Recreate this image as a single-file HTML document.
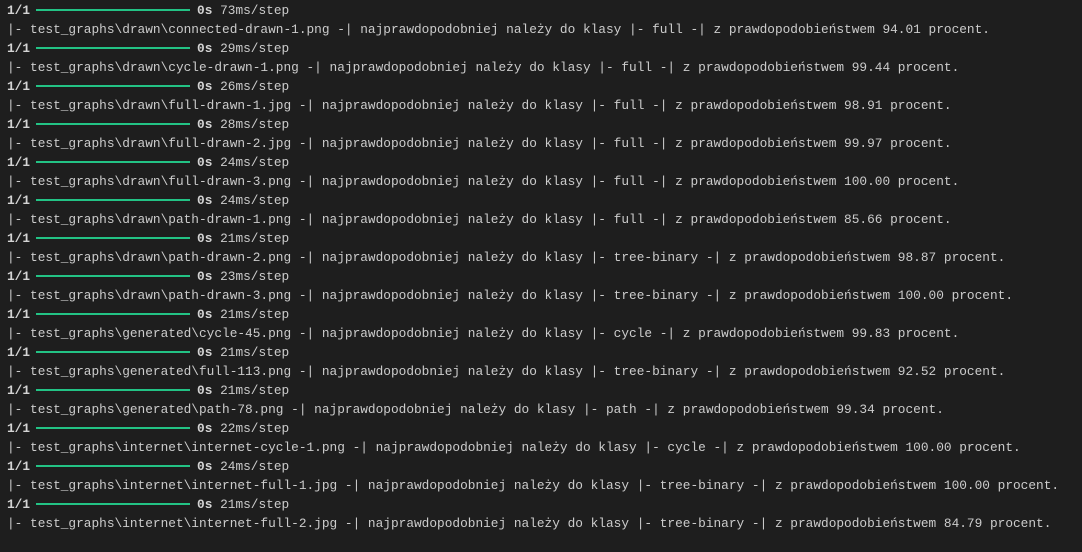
<!DOCTYPE html>
<html><head><meta charset="utf-8"><style>
html,body{margin:0;padding:0;background:#1e1e1e;width:1082px;height:552px;overflow:hidden}
pre{margin:0;padding:1px 0 0 7px;font-family:"Liberation Mono",monospace;font-size:12.8px;line-height:19px;color:#cccccc}
b{font-weight:bold;color:#d4d4d4}
.bar{display:inline-block;width:154px;height:2px;background:#23c385;vertical-align:3px;margin:0 7px 0 6px}
</style></head><body><pre><b>1/1</b><span class="bar"></span><b>0s</b> 73ms/step
|- test_graphs\drawn\connected-drawn-1.png -| najprawdopodobniej należy do klasy |- full -| z prawdopodobieństwem 94.01 procent.
<b>1/1</b><span class="bar"></span><b>0s</b> 29ms/step
|- test_graphs\drawn\cycle-drawn-1.png -| najprawdopodobniej należy do klasy |- full -| z prawdopodobieństwem 99.44 procent.
<b>1/1</b><span class="bar"></span><b>0s</b> 26ms/step
|- test_graphs\drawn\full-drawn-1.jpg -| najprawdopodobniej należy do klasy |- full -| z prawdopodobieństwem 98.91 procent.
<b>1/1</b><span class="bar"></span><b>0s</b> 28ms/step
|- test_graphs\drawn\full-drawn-2.jpg -| najprawdopodobniej należy do klasy |- full -| z prawdopodobieństwem 99.97 procent.
<b>1/1</b><span class="bar"></span><b>0s</b> 24ms/step
|- test_graphs\drawn\full-drawn-3.png -| najprawdopodobniej należy do klasy |- full -| z prawdopodobieństwem 100.00 procent.
<b>1/1</b><span class="bar"></span><b>0s</b> 24ms/step
|- test_graphs\drawn\path-drawn-1.png -| najprawdopodobniej należy do klasy |- full -| z prawdopodobieństwem 85.66 procent.
<b>1/1</b><span class="bar"></span><b>0s</b> 21ms/step
|- test_graphs\drawn\path-drawn-2.png -| najprawdopodobniej należy do klasy |- tree-binary -| z prawdopodobieństwem 98.87 procent.
<b>1/1</b><span class="bar"></span><b>0s</b> 23ms/step
|- test_graphs\drawn\path-drawn-3.png -| najprawdopodobniej należy do klasy |- tree-binary -| z prawdopodobieństwem 100.00 procent.
<b>1/1</b><span class="bar"></span><b>0s</b> 21ms/step
|- test_graphs\generated\cycle-45.png -| najprawdopodobniej należy do klasy |- cycle -| z prawdopodobieństwem 99.83 procent.
<b>1/1</b><span class="bar"></span><b>0s</b> 21ms/step
|- test_graphs\generated\full-113.png -| najprawdopodobniej należy do klasy |- tree-binary -| z prawdopodobieństwem 92.52 procent.
<b>1/1</b><span class="bar"></span><b>0s</b> 21ms/step
|- test_graphs\generated\path-78.png -| najprawdopodobniej należy do klasy |- path -| z prawdopodobieństwem 99.34 procent.
<b>1/1</b><span class="bar"></span><b>0s</b> 22ms/step
|- test_graphs\internet\internet-cycle-1.png -| najprawdopodobniej należy do klasy |- cycle -| z prawdopodobieństwem 100.00 procent.
<b>1/1</b><span class="bar"></span><b>0s</b> 24ms/step
|- test_graphs\internet\internet-full-1.jpg -| najprawdopodobniej należy do klasy |- tree-binary -| z prawdopodobieństwem 100.00 procent.
<b>1/1</b><span class="bar"></span><b>0s</b> 21ms/step
|- test_graphs\internet\internet-full-2.jpg -| najprawdopodobniej należy do klasy |- tree-binary -| z prawdopodobieństwem 84.79 procent.
</pre></body></html>
